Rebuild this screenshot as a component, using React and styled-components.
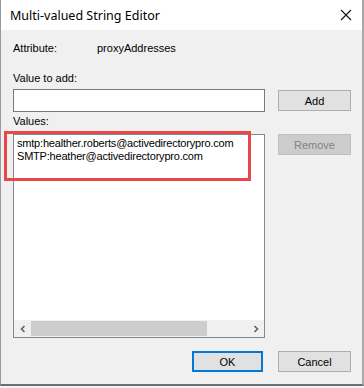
import React from 'react';
import { styled, createGlobalStyle } from 'styled-components';

const GlobalStyle = createGlobalStyle`
  html, body {
    margin: 0;
    padding: 0;
    background: #f3f3f3;
  }
  body {
    font-family: "Liberation Sans", Arial, sans-serif;
    font-size: 11px;
    color: #000;
  }
`;

const Window = styled.div`
  position: relative;
  width: 364px;
  height: 386px;
  box-sizing: border-box;
  background: #f0f0f0;
  border-left: 1px solid #9a9a9a;
  border-right: 2px solid #a8a8a8;
  border-bottom: 2px solid #6e6e6e;
  display: flex;
  flex-direction: column;
`;

const TitleBar = styled.div`
  height: 30px;
  background: #fff;
  display: flex;
  align-items: center;
  justify-content: space-between;
  padding: 0 10px 0 9px;
  flex-shrink: 0;
`;

const Title = styled.span`
  font-family: "Noto Sans", "Open Sans", sans-serif;
  font-size: 12.5px;
  color: #000;
`;

const CloseIcon = () => (
  <svg width="12" height="12" viewBox="0 0 12 12">
    <path d="M1 1 L11 11 M11 1 L1 11" stroke="#111" strokeWidth="1.1" fill="none" />
  </svg>
);

const Body = styled.div`
  padding: 11px 11px 0 12px;
  display: flex;
  flex-direction: column;
`;

const AttrRow = styled.div`
  display: flex;
  height: 14px;
  line-height: 14px;
`;

const AttrLabel = styled.span`
  width: 84px;
`;

const Label = styled.div`
  height: 14px;
  line-height: 14px;
  margin-top: ${p => p.$top}px;
`;

const Row = styled.div`
  display: flex;
  justify-content: space-between;
  align-items: ${p => p.$align || 'center'};
  margin-top: ${p => p.$top}px;
`;

const TextInput = styled.div`
  width: 252px;
  height: 23px;
  box-sizing: border-box;
  background: #fff;
  border: 1px solid #7a7a7a;
`;

const Button = styled.div`
  height: 21px;
  box-sizing: border-box;
  display: flex;
  align-items: center;
  justify-content: center;
  background: ${p => (p.$disabled ? '#cccccc' : '#e1e1e1')};
  border: ${p => (p.$primary ? '2px solid #0078d7' : p.$disabled ? '1px solid #bfbfbf' : '1px solid #adadad')};
  color: ${p => (p.$disabled ? '#838383' : '#000')};
  width: ${p => p.$width || 73}px;
`;

const ListBox = styled.div`
  width: 252px;
  height: 204px;
  box-sizing: border-box;
  background: #fff;
  border: 1px solid #828790;
  display: flex;
  flex-direction: column;
`;

const Items = styled.div`
  flex: 1;
  padding: 2px 0 0 3px;
  font-size: 11px;
  letter-spacing: -0.2px;
  line-height: 13px;
`;

const ScrollBar = styled.div`
  height: 17px;
  background: #f0f0f0;
  display: flex;
  align-items: center;
`;

const Arrow = styled.div`
  width: 17px;
  height: 17px;
  display: flex;
  align-items: center;
  justify-content: center;
`;

const Track = styled.div`
  flex: 1;
  height: 15px;
  display: flex;
  align-items: center;
`;

const Thumb = styled.div`
  height: 15px;
  width: 176px;
  background: #cdcdcd;
`;

const Chevron = ({ dir }) => (
  <svg width="8" height="8" viewBox="0 0 8 8">
    <path
      d={dir === 'left' ? 'M5.5 1 L2.5 4 L5.5 7' : 'M2.5 1 L5.5 4 L2.5 7'}
      stroke="#606060"
      strokeWidth="1.6"
      fill="none"
    />
  </svg>
);

const Footer = styled.div`
  display: flex;
  justify-content: flex-end;
  gap: 15px;
  margin-top: 13px;
`;

const Highlight = styled.div`
  position: absolute;
  left: 3px;
  top: 131px;
  width: 247px;
  height: 50px;
  box-sizing: border-box;
  border: 3px solid #e8474b;
  pointer-events: none;
`;

const App = () => {
  return (
    <>
      <GlobalStyle />
      <Window>
        <TitleBar>
          <Title>Multi-valued String Editor</Title>
          <CloseIcon />
        </TitleBar>
        <Body>
          <AttrRow>
            <AttrLabel>Attribute:</AttrLabel>
            <span>proxyAddresses</span>
          </AttrRow>
          <Label $top={16}>Value to add:</Label>
          <Row $top={4}>
            <TextInput />
            <Button>Add</Button>
          </Row>
          <Label $top={2}>Values:</Label>
          <Row $top={6} $align="flex-start">
            <ListBox>
              <Items>
                <div>smtp:healther.roberts@activedirectorypro.com</div>
                <div>SMTP:heather@activedirectorypro.com</div>
              </Items>
              <ScrollBar>
                <Arrow><Chevron dir="left" /></Arrow>
                <Track><Thumb /></Track>
                <Arrow><Chevron dir="right" /></Arrow>
              </ScrollBar>
            </ListBox>
            <Button $disabled>Remove</Button>
          </Row>
          <Footer>
            <Button $primary $width={71}>OK</Button>
            <Button>Cancel</Button>
          </Footer>
        </Body>
        <Highlight />
      </Window>
    </>
  );
};

export default App;
